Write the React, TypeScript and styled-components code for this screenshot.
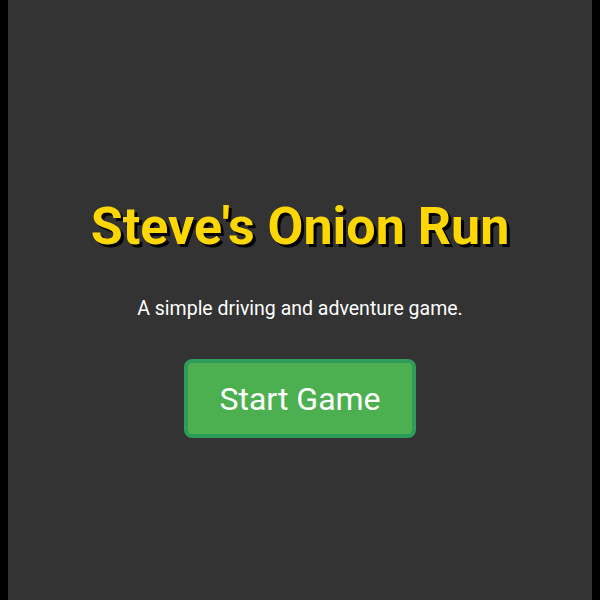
import styled, { createGlobalStyle } from "styled-components";

const GlobalStyle = createGlobalStyle`
  html, body {
    background-color: #000;
  }
  body {
    margin: 0 8px;
    font-family: Roboto, "Liberation Sans", sans-serif;
  }
`;

const Screen = styled.div`
  min-height: 100vh;
  background-color: #333;
  color: #fff;
  display: flex;
  flex-direction: column;
  align-items: center;
  justify-content: center;
  padding-top: 34px;
  box-sizing: border-box;
`;

const Title = styled.h1`
  margin: 0;
  font-size: 52px;
  font-weight: 700;
  color: #ffd700;
  text-shadow: 3px 3px 0 #000;
`;

const Subtitle = styled.p`
  margin: 40px 0 0;
  font-size: 19.5px;
`;

const StartButton = styled.button`
  margin-top: 39px;
  padding: 16.5px 31px;
  font-family: Roboto, "Liberation Sans", sans-serif;
  font-size: 32px;
  color: #fff;
  background-color: #4caf50;
  border: 4px solid #2e9b5b;
  border-radius: 8px;
  cursor: pointer;
`;

function App() {
  return (
    <>
      <GlobalStyle />
      <Screen>
        <Title>Steve's Onion Run</Title>
        <Subtitle>A simple driving and adventure game.</Subtitle>
        <StartButton>Start Game</StartButton>
      </Screen>
    </>
  );
}

export default App;
